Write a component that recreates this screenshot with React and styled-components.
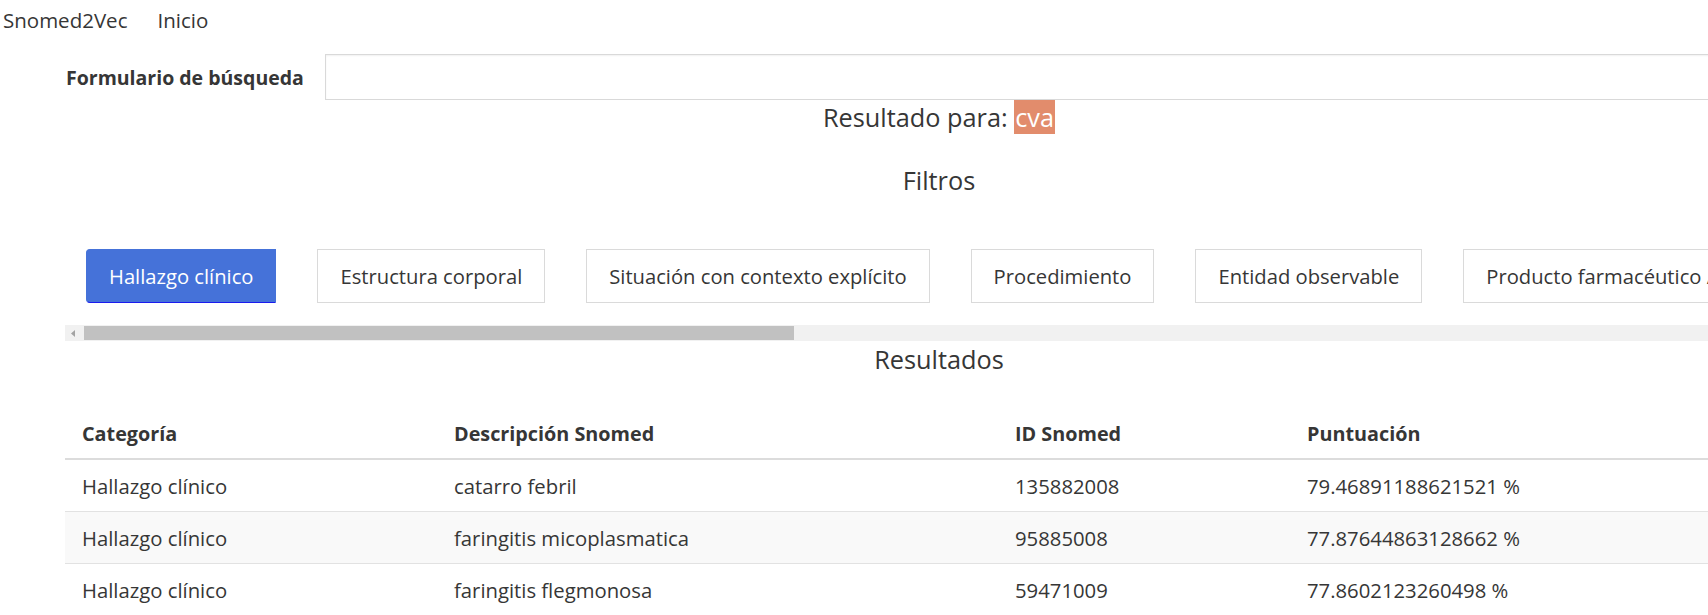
import React from 'react'
import styled, { createGlobalStyle } from 'styled-components'

const GlobalStyle = createGlobalStyle`
    body{
        margin: 0;
        font-family: "Open Sans", "Noto Sans", sans-serif;
        color: #363636;
        background: #fff;
        overflow: hidden;
    }
`;

const Navbar = styled.nav`
    display: flex;
    align-items: center;
    height: 40px;
    padding-left: 3px;
    gap: 30px;
    font-size: 20.5px;

    a{
        color: #363636;
        text-decoration: none;
    }
`;

const Container = styled.main`
    width: 1748px;
    margin-left: 65px;
`;

const FormRow = styled.form`
    display: grid;
    grid-template-columns: 260px 1fr;
    align-items: center;
    margin-top: 14px;

    label{
        font-weight: 700;
        font-size: 19.5px;
        padding-left: 1px;
    }
    input{
        height: 46px;
        box-sizing: border-box;
        border: 1px solid #d9d9d9;
        box-shadow: inset 0 1px 2px rgba(0,0,0,0.06);
        font: inherit;
    }
`;

const Heading = styled.h2`
    margin: 0;
    text-align: center;
    font-weight: 400;
    font-size: 25.3px;
    line-height: 30px;
    padding-top: ${p => p.$top || 0}px;
`;

const Mark = styled.mark`
    background: #e28c6c;
    color: #fff;
    padding: 0 1px;
`;

const FilterRow = styled.div`
    display: flex;
    gap: 41px;
    padding: 0 21px;
    margin-top: 54px;
    white-space: nowrap;
`;

const FilterButton = styled.button`
    flex: none;
    height: 54px;
    padding: 0 22px;
    font-family: inherit;
    font-size: 20.2px;
    cursor: pointer;
    border: 1px solid ${p => (p.$active ? '#4572d9' : '#dadada')};
    border-bottom-color: ${p => (p.$active ? '#1a1aee' : '#dadada')};
    border-radius: ${p => (p.$active ? '4px 0 0 4px' : '0')};
    background: ${p => (p.$active ? '#4572d9' : '#fff')};
    color: ${p => (p.$active ? '#fff' : '#363636')};
`;

const ScrollTrack = styled.div`
    display: flex;
    align-items: center;
    height: 16px;
    margin-top: 22px;
    background: #f1f1f1;
`;

const ScrollArrow = styled.div`
    width: 15px;
    display: flex;
    justify-content: center;
    svg{ display: block; }
`;

const ScrollThumb = styled.div`
    width: 710px;
    height: 14px;
    margin-left: 4px;
    background: #c1c1c1;
`;

const Table = styled.table`
    width: 100%;
    border-collapse: collapse;
    margin-top: 34px;
    font-size: 20.3px;

    th{
        text-align: left;
        font-weight: 700;
        font-size: 19.8px;
        height: 50px;
        padding: 0 17px;
        border-bottom: 2px solid #dcdcdc;
    }
    td{
        height: 51px;
        padding: 0 17px;
        border-bottom: 1px solid #e2e2e2;
    }
    tbody tr:nth-child(even){
        background: #f9f9f9;
    }
`;

const filters = [
    'Hallazgo clínico',
    'Estructura corporal',
    'Situación con contexto explícito',
    'Procedimiento',
    'Entidad observable',
    'Producto farmacéutico / biológico',
];

const rows = [
    ['Hallazgo clínico', 'catarro febril', '135882008', '79.46891188621521 %'],
    ['Hallazgo clínico', 'faringitis micoplasmatica', '95885008', '77.87644863128662 %'],
    ['Hallazgo clínico', 'faringitis flegmonosa', '59471009', '77.8602123260498 %'],
];

function App() {
  return (
    <>
        <GlobalStyle />
        <Navbar>
            <a href="#">Snomed2Vec</a>
            <a href="#">Inicio</a>
        </Navbar>
        <Container>
            <FormRow>
                <label>Formulario de búsqueda</label>
                <input type="text" />
            </FormRow>
            <Heading $top={2}>Resultado para: <Mark>cva</Mark></Heading>
            <Heading $top={33}>Filtros</Heading>
            <FilterRow>
                {filters.map((f, i) => (
                    <FilterButton key={f} $active={i === 0}>{f}</FilterButton>
                ))}
            </FilterRow>
            <ScrollTrack>
                <ScrollArrow>
                    <svg width="4" height="7" viewBox="0 0 4 7"><path d="M4 0 L0 3.5 L4 7 Z" fill="#a3a3a3"/></svg>
                </ScrollArrow>
                <ScrollThumb />
            </ScrollTrack>
            <Heading $top={3}>Resultados</Heading>
            <Table>
                <colgroup>
                    <col style={{ width: 372 }} />
                    <col style={{ width: 561 }} />
                    <col style={{ width: 292 }} />
                    <col />
                </colgroup>
                <thead>
                    <tr>
                        <th>Categoría</th>
                        <th>Descripción Snomed</th>
                        <th>ID Snomed</th>
                        <th>Puntuación</th>
                    </tr>
                </thead>
                <tbody>
                    {rows.map(r => (
                        <tr key={r[2]}>
                            {r.map((c, j) => <td key={j}>{c}</td>)}
                        </tr>
                    ))}
                </tbody>
            </Table>
        </Container>
    </>
  )
}

export default App
